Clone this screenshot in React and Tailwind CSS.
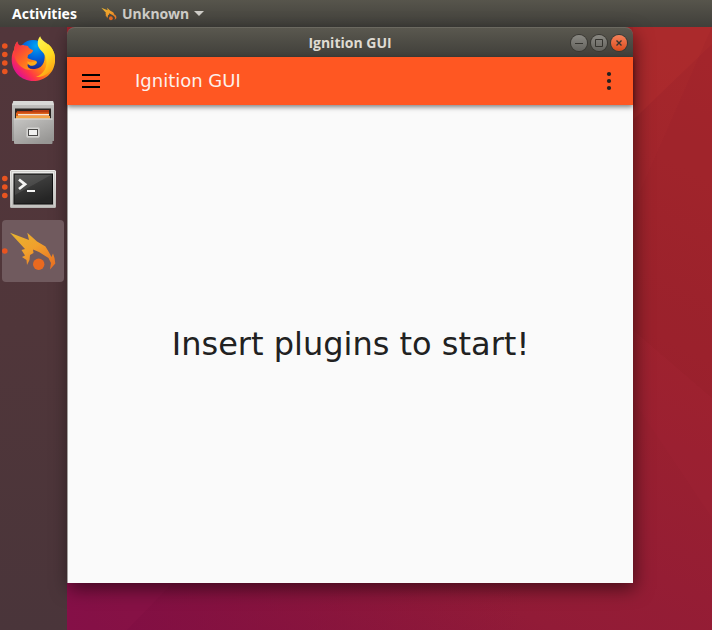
import React from "react";

function IgnitionMark() {
  return (
    <>
      <path
        d="M8 12.7 27 20 25.3 12.7 35 21.5 43.5 26.5 46.5 31.5 49.5 37 51 33.5 52.5 38 53.3 43.5 48 49.5 49 43 46.5 38 42.5 35.5 37 32 31 29.5 31.5 33 28 35 27.5 40 25 45 24.5 40 20 37 23 35.5 19.5 30 23 29Z"
        fill="url(#ignition-fire)"
      />
      <circle cx="36.7" cy="44.3" r="5.7" fill="#e9691f" />
    </>
  );
}

function Wallpaper() {
  return (
    <svg
      className="absolute inset-0 -z-10 h-full w-full"
      viewBox="0 0 712 630"
      preserveAspectRatio="none"
      aria-hidden="true"
    >
      <defs>
        <linearGradient id="wall" gradientUnits="userSpaceOnUse" x1="712" y1="60" x2="380" y2="760">
          <stop offset="0" stopColor="#a6272b" />
          <stop offset="0.35" stopColor="#9c222d" />
          <stop offset="0.75" stopColor="#921b37" />
          <stop offset="1" stopColor="#84123e" />
        </linearGradient>
        <linearGradient id="wall-left" x1="0" x2="1" y1="0" y2="0">
          <stop offset="0" stopColor="#800d47" stopOpacity="0.9" />
          <stop offset="1" stopColor="#87133b" stopOpacity="0" />
        </linearGradient>
      </defs>
      <rect width="712" height="630" fill="url(#wall)" />
      <rect x="67" y="560" width="460" height="70" fill="url(#wall-left)" />
      <path d="M633 27h79v17L633 120Z" fill="#b53030" opacity="0.4" />
      <path d="M633 208v122l79 68V27Z" fill="#96202a" opacity="0.16" />
      <path d="M633 330l79 68v120L633 400Z" fill="#a82535" opacity="0.16" />
      <path d="M67 570h118l-58 60H67Z" fill="#8c1449" opacity="0.4" />
    </svg>
  );
}

function FirefoxIcon() {
  return (
    <svg viewBox="0 0 62 62" className="size-full" aria-hidden="true">
      <defs>
        <linearGradient id="fox" x1="0.9" y1="0.15" x2="0.15" y2="0.8">
          <stop offset="0" stopColor="#ffe226" />
          <stop offset="0.3" stopColor="#ffb414" />
          <stop offset="0.55" stopColor="#ff7a18" />
          <stop offset="0.8" stopColor="#ff3647" />
          <stop offset="1" stopColor="#e31587" />
        </linearGradient>
        <radialGradient id="globe" cx="0.6" cy="0.2" r="0.85">
          <stop offset="0" stopColor="#00a4f5" />
          <stop offset="0.5" stopColor="#0060da" />
          <stop offset="1" stopColor="#291b78" />
        </radialGradient>
        <linearGradient id="fox-head" x1="0" y1="0" x2="0.8" y2="1">
          <stop offset="0" stopColor="#f0234f" />
          <stop offset="0.6" stopColor="#ff6a22" />
          <stop offset="1" stopColor="#ff9a16" />
        </linearGradient>
        <linearGradient id="flame" x1="0.3" y1="0" x2="0.7" y2="1">
          <stop offset="0" stopColor="#fff44f" />
          <stop offset="0.55" stopColor="#ffd91f" />
          <stop offset="1" stopColor="#ff9814" />
        </linearGradient>
      </defs>
      <circle cx="31" cy="27" r="15" fill="url(#globe)" />
      <path
        d="M15.3 13.5C15.5 15.5 16 17 17 18.2L22 17 19 26C18 36 25 42 33 41C42 40 44 31 42 24L46 16C51 20 53.5 26 53 33C52.4 45 43 53 31.5 53C19 53 9.7 43.5 9.7 31.5C9.7 27.5 10.5 24 12.2 21.5C12.2 18.5 13.3 15.5 15.3 13.5Z"
        fill="url(#fox)"
      />
      <path
        d="M15.3 13.5C16 16 17 17.5 19 17.5C21.5 17 24 17.5 26 18C26.5 20 28.5 21.5 31 22C31 24.5 28.5 25.5 26 27L25.5 30C28 32 31 31.5 34.5 33C33.5 36 29.5 36.7 26 36C24.5 38 27 41 31 42C22 43 15.5 37 13 30C11.5 23 12.2 17 15.3 13.5Z"
        fill="url(#fox-head)"
      />
      <path
        d="M25.5 33C29 36 31 33 34 33.2C36 34 34.6 36.5 31.5 37.6C29 38.4 26.5 37.2 25.5 35Z"
        fill="#ffac18"
      />
      <path
        d="M38.2 8.3C38.8 11 41.5 13 45 15.5C50.5 20 53.3 25.5 53 32C51.5 42 44 49.5 34 49C42 46 46 39 44 30C43 24.5 36 21.5 35.7 16C35.6 12.8 36.5 10.2 38.2 8.3Z"
        fill="url(#flame)"
      />
    </svg>
  );
}

function FilesIcon() {
  return (
    <svg viewBox="0 0 62 62" className="size-full" aria-hidden="true">
      <defs>
        <linearGradient id="cabinet" x1="0" y1="0" x2="0" y2="1">
          <stop offset="0" stopColor="#c4c3c1" />
          <stop offset="1" stopColor="#949391" />
        </linearGradient>
        <linearGradient id="drawer" x1="0" y1="0" x2="0.7" y2="1">
          <stop offset="0" stopColor="#c7c6c4" />
          <stop offset="1" stopColor="#979694" />
        </linearGradient>
      </defs>
      <path d="M11.5 9h39.5L52 13v36H10V13Z" fill="url(#cabinet)" />
      <path d="M11.5 9h39.5L52 13H10Z" fill="#d9d9d7" />
      <rect x="13" y="16.5" width="36" height="11" fill="#2a2522" />
      <path d="M15 19h15l1-1h16v9H15Z" fill="#b63c12" />
      <path d="M14 20.5h33V27H14Z" fill="#df621a" />
      <path d="M16 22h31v1.5H16Z" fill="#f6e8d5" />
      <path d="M14 24h34v3H14Z" fill="#f3a346" />
      <rect x="12" y="26.5" width="38.5" height="25.5" rx="1" fill="url(#drawer)" />
      <path d="M12 27h38.5" stroke="#dedddb" />
      <rect x="24.5" y="35.5" width="13" height="10" rx="1.5" fill="#d6d5d3" stroke="#c2c1bf" />
      <rect x="26.5" y="37.5" width="9" height="6" fill="#f0f0ef" stroke="#4b4a49" />
    </svg>
  );
}

function TerminalIcon() {
  return (
    <svg viewBox="0 0 62 62" className="size-full" aria-hidden="true">
      <defs>
        <linearGradient id="bezel" x1="0" y1="0" x2="0" y2="1">
          <stop offset="0" stopColor="#eeeeec" />
          <stop offset="1" stopColor="#b5b4b1" />
        </linearGradient>
        <linearGradient id="screen" x1="0" y1="0" x2="0.4" y2="1">
          <stop offset="0" stopColor="#4b4b4a" />
          <stop offset="1" stopColor="#252525" />
        </linearGradient>
      </defs>
      <rect x="8" y="14" width="46" height="38" rx="1.5" fill="url(#bezel)" />
      <rect x="9.5" y="15.5" width="43" height="34.5" fill="none" stroke="#cfcecb" />
      <rect x="12" y="18" width="38.5" height="30" fill="url(#screen)" stroke="#111" />
      <path d="M13 19h36L13 39Z" fill="#fff" opacity="0.09" />
      <path d="M17 23.5 23 28.3 17 33" fill="none" stroke="#f5f5f4" strokeWidth="2.8" />
      <path d="M25 35h8" stroke="#f5f5f4" strokeWidth="2" />
    </svg>
  );
}

function IgnitionIcon() {
  return (
    <svg viewBox="0 0 62 62" className="size-full" aria-hidden="true">
      <defs>
        <linearGradient id="ignition-fire" x1="0" y1="0" x2="0.8" y2="1">
          <stop offset="0" stopColor="#e6b42f" />
          <stop offset="0.5" stopColor="#f0a02c" />
          <stop offset="1" stopColor="#e87322" />
        </linearGradient>
      </defs>
      <IgnitionMark />
    </svg>
  );
}

const RUNNING_DOTS = {
  1: [31],
  3: [22.5, 31, 39.5],
  4: [18, 26.5, 35, 43.5],
};

const APPS = [
  { name: "Firefox", Icon: FirefoxIcon, windows: 4 },
  { name: "Files", Icon: FilesIcon, windows: 0 },
  { name: "Terminal", Icon: TerminalIcon, windows: 3 },
  { name: "Ignition", Icon: IgnitionIcon, windows: 1, active: true },
];

function Dock() {
  return (
    <nav
      aria-label="Dock"
      className="flex w-[67px] shrink-0 flex-col gap-0.5 bg-linear-to-b from-[#52363b] via-[#50363a] to-[#4a353a] pt-px pl-0.5"
    >
      {APPS.map(({ name, Icon, windows, active }) => (
        <button
          key={name}
          aria-label={name}
          className={`relative size-[62px] rounded-sm ${active ? "bg-[#705a5e]" : ""}`}
        >
          <Icon />
          {windows > 0 && (
            <svg viewBox="0 0 6 62" className="absolute top-0 left-0 h-full w-1.5" aria-hidden="true">
              {RUNNING_DOTS[windows].map((y) => (
                <circle key={y} cx="2.8" cy={y} r="2.8" fill="#e95420" />
              ))}
            </svg>
          )}
        </button>
      ))}
    </nav>
  );
}

function TopBar() {
  return (
    <header className="flex h-[27px] shrink-0 items-center bg-linear-to-b from-[#57554c] to-[#403f3a] px-3 font-['Noto_Sans','Open_Sans',sans-serif] text-sm font-bold">
      <button className="text-white">Activities</button>
      <button className="ml-6 flex items-center gap-[5px] text-[#cfcdc8]">
        <svg viewBox="7 11 48 41" className="h-[14px] w-4" aria-hidden="true">
          <IgnitionMark />
        </svg>
        Unknown
        <svg viewBox="0 0 10 5" className="h-[5px] w-2.5" aria-hidden="true">
          <path d="M0 0h10L5 5Z" fill="#cfcdc8" />
        </svg>
      </button>
    </header>
  );
}

function WindowControl({ label, close, children }) {
  return (
    <button
      aria-label={label}
      className={`size-4 rounded-full ring-1 ring-[#393833] ${
        close
          ? "bg-linear-to-b from-[#f58159] to-[#dc4a18]"
          : "bg-linear-to-b from-[#8a8983] to-[#64635e]"
      }`}
    >
      <svg viewBox="0 0 16 16" className="size-full" fill="none" stroke="#35342f" aria-hidden="true">
        {children}
      </svg>
    </button>
  );
}

function TitleBar() {
  return (
    <div className="grid h-[30px] shrink-0 grid-cols-[1fr_auto_1fr] items-center rounded-t-lg border-t border-[#6b6960] bg-linear-to-b from-[#5a584f] to-[#403f3a] px-1.5">
      <h1 className="col-start-2 font-['Open_Sans','Noto_Sans',sans-serif] text-sm font-bold text-[#dfdbd2]">
        Ignition GUI
      </h1>
      <div className="flex gap-1 justify-self-end">
        <WindowControl label="Minimize">
          <path d="M4 8.5h8" />
        </WindowControl>
        <WindowControl label="Maximize">
          <path d="M4.5 4.5h7v7h-7Z" />
        </WindowControl>
        <WindowControl label="Close" close>
          <path d="m5.500 5.500 5 5m0-5-5 5" strokeWidth="1.400" />
        </WindowControl>
      </div>
    </div>
  );
}

function ToolBar() {
  return (
    <div className="relative flex h-12 shrink-0 items-center bg-[#ff5722] font-['DejaVu_Sans',sans-serif] shadow-[0_2px_5px_rgba(0,0,0,0.5)]">
      <button aria-label="Menu" className="flex size-12 items-center justify-center">
        <svg viewBox="0 0 18 14" className="h-[14px] w-[18px]" aria-hidden="true">
          <path d="M0 1h18M0 7h18M0 13h18" stroke="#000" strokeWidth="2" />
        </svg>
      </button>
      <h2 className="ml-5 grow text-lg text-[#fdf0ec]">Ignition GUI</h2>
      <button aria-label="More options" className="flex size-12 items-center justify-center">
        <svg viewBox="0 0 4 18" className="h-[18px] w-1 overflow-visible" fill="#212121" aria-hidden="true">
          <circle cx="2" cy="2" r="2.1" />
          <circle cx="2" cy="9" r="2.1" />
          <circle cx="2" cy="16" r="2.1" />
        </svg>
      </button>
    </div>
  );
}

export default function App() {
  return (
    <div className="relative isolate flex min-h-screen flex-col overflow-hidden">
      <Wallpaper />
      <TopBar />
      <div className="flex grow">
        <Dock />
        <section
          aria-label="Ignition GUI"
          className="mr-[79px] mb-[47px] flex grow flex-col rounded-t-lg shadow-[2px_6px_18px_rgba(0,0,0,0.5)]"
        >
          <TitleBar />
          <ToolBar />
          <main className="flex grow items-center justify-center border-l border-[#a3a09e] bg-[#fafafa]">
            <p className="font-['DejaVu_Sans',sans-serif] text-[32px] text-[#212121]">
              Insert plugins to start!
            </p>
          </main>
        </section>
      </div>
    </div>
  );
}
